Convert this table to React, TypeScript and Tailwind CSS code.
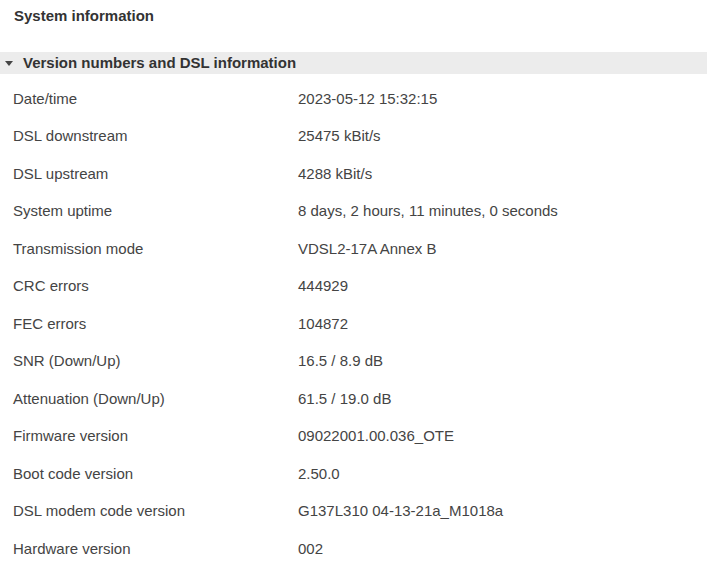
const rows: [string, string][] = [
  ["Date/time", "2023-05-12 15:32:15"],
  ["DSL downstream", "25475 kBit/s"],
  ["DSL upstream", "4288 kBit/s"],
  ["System uptime", "8 days, 2 hours, 11 minutes, 0 seconds"],
  ["Transmission mode", "VDSL2-17A Annex B"],
  ["CRC errors", "444929"],
  ["FEC errors", "104872"],
  ["SNR (Down/Up)", "16.5 / 8.9 dB"],
  ["Attenuation (Down/Up)", "61.5 / 19.0 dB"],
  ["Firmware version", "09022001.00.036_OTE"],
  ["Boot code version", "2.50.0"],
  ["DSL modem code version", "G137L310 04-13-21a_M1018a"],
  ["Hardware version", "002"],
];

export default function App() {
  return (
    <div className="h-[573px] w-[707px] overflow-hidden bg-white font-['Liberation_Sans',Arial,sans-serif] text-[#333]">
      <div className="flex h-[32px] items-center px-[14px] text-[15px] font-bold text-[#333]">
        System information
      </div>
      <div className="mt-[20px] flex h-[22px] items-center bg-[#ececec] text-[15px] font-bold text-[#333]">
        <svg width="8" height="5" viewBox="0 0 8 5" className="ml-[5px] mr-[10px]">
          <path d="M0 0 H8 L4 5 Z" fill="#444" />
        </svg>
        Version numbers and DSL information
      </div>
      <div className="mt-[6px] flex flex-col">
        {rows.map(([label, value]) => (
          <div key={label} className="flex h-[37.5px] items-center text-[15px] text-[#444]">
            <div className="w-[298px] pl-[13px]">{label}</div>
            <div>{value}</div>
          </div>
        ))}
      </div>
    </div>
  );
}
